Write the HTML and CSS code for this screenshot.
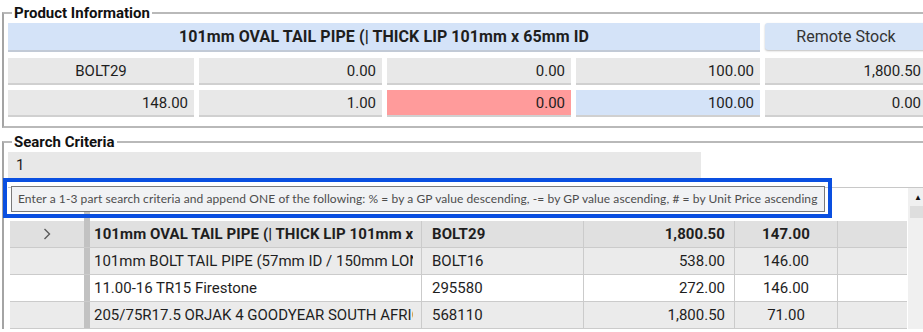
FILE: index.html
```html
<!DOCTYPE html>
<html lang="en">
<head>
  <meta charset="UTF-8" />
  <title>Product Lookup</title>
  <link rel="stylesheet" href="styles.css">
</head>
<body>
  <fieldset class="group product">
    <legend>Product Information</legend>
    <div class="info-grid">
      <div class="title-bar">101mm OVAL TAIL PIPE (| THICK LIP 101mm x 65mm ID</div>
      <button class="remote-btn">Remote Stock</button>
      <div class="cell center">BOLT29</div>
      <div class="cell">0.00</div>
      <div class="cell">0.00</div>
      <div class="cell">100.00</div>
      <div class="cell">1,800.50</div>
      <div class="cell">148.00</div>
      <div class="cell">1.00</div>
      <div class="cell warn">0.00</div>
      <div class="cell info">100.00</div>
      <div class="cell">0.00</div>
    </div>
  </fieldset>

  <fieldset class="group search">
    <legend>Search Criteria</legend>
    <div class="search-body">
      <div class="search-input">1</div>

      <div class="results">
        <div class="rows">
          <div class="grid-row head">
            <div class="rh"></div><div class="bar"></div>
            <div class="gc"></div><div class="gc"></div><div class="gc"></div><div class="gc"></div><div class="gc"></div>
          </div>
          <div class="grid-row current">
            <div class="rh">
              <svg width="8" height="12" viewBox="0 0 8 12"><polyline points="1.5,1 6.5,6 1.5,11" fill="none" stroke="#5a5a5a" stroke-width="1.4"/></svg>
            </div>
            <div class="bar"></div>
            <div class="gc desc"><span class="clip">101mm OVAL TAIL PIPE (| THICK LIP 101mm x 65mm ID</span></div>
            <div class="gc code">BOLT29</div>
            <div class="gc num">1,800.50</div>
            <div class="gc mid">147.00</div>
            <div class="gc"></div>
          </div>
          <div class="grid-row alt">
            <div class="rh"></div><div class="bar"></div>
            <div class="gc desc"><span class="clip">101mm BOLT TAIL PIPE (57mm ID / 150mm LONG)</span></div>
            <div class="gc code">BOLT16</div>
            <div class="gc num">538.00</div>
            <div class="gc mid">146.00</div>
            <div class="gc"></div>
          </div>
          <div class="grid-row">
            <div class="rh"></div><div class="bar"></div>
            <div class="gc desc"><span class="clip">11.00-16 TR15 Firestone</span></div>
            <div class="gc code">295580</div>
            <div class="gc num">272.00</div>
            <div class="gc mid">146.00</div>
            <div class="gc"></div>
          </div>
          <div class="grid-row alt">
            <div class="rh"></div><div class="bar"></div>
            <div class="gc desc"><span class="clip">205/75R17.5 ORJAK 4 GOODYEAR SOUTH AFRICA</span></div>
            <div class="gc code">568110</div>
            <div class="gc num">1,800.50</div>
            <div class="gc mid">71.00</div>
            <div class="gc"></div>
          </div>
        </div>
        <div class="scrollbar">
          <span class="arrow">&#9650;</span>
          <div class="thumb"></div>
        </div>
      </div>

      <div class="hint">
        <div class="hint-box">Enter a 1-3 part search criteria and append ONE of the following: % = by a GP value descending, -= by GP value ascending, # = by Unit Price ascending</div>
      </div>
    </div>
  </fieldset>
</body>
</html>
```

FILE: styles.css
```css
html, body {
  overflow: hidden;
}
body {
  margin: 0;
  background: #fff;
  color: #1e1e1e;
  font-family: Roboto, "Liberation Sans", Arial, sans-serif;
  font-size: 15px;
}
.group {
  margin: 0 -20px 0 2px;
  padding: 1px 0 9px 4px;
  border: 2px solid #b9b9b9;
  border-left-color: #a4a4a4;
  min-width: 0;
}
.group legend {
  margin-left: 4px;
  padding: 0 2px;
  font-weight: bold;
  font-size: 15px;
  line-height: 18px;
  color: #111;
}
.product {
  margin-top: 4px;
}
.search {
  margin-top: 5px;
  padding-bottom: 0;
  border-bottom: none;
}

/* product info */
.info-grid {
  display: grid;
  grid-template-columns: 186px 183px 184px 184px 162px;
  column-gap: 5px;
  row-gap: 5px;
}
.title-bar {
  grid-column: 1 / 5;
  height: 29px;
  margin-bottom: 1px;
  box-sizing: border-box;
  background: #d4e3f8;
  border-bottom: 2px solid #c2cad6;
  font-weight: bold;
  font-size: 16px;
  letter-spacing: 0.08px;
  text-align: center;
  line-height: 28px;
}
.remote-btn {
  height: 27px;
  margin: 0;
  padding: 0;
  border: none;
  border-radius: 3px;
  background: #d6e4f7;
  box-shadow: 0 1px 2px rgba(0, 0, 0, 0.25);
  font-family: inherit;
  font-size: 16px;
  color: #333;
}
.cell {
  height: 27px;
  box-sizing: border-box;
  padding: 0 6px;
  background: #e8e8e8;
  border-bottom: 2px solid #d0d0d0;
  text-align: right;
  line-height: 26px;
}
.cell.center {
  text-align: center;
}
.cell.warn {
  background: #ff9b9b;
}
.cell.info {
  background: #d4e3f8;
}

/* search */
.search-body {
  position: relative;
}
.search-input {
  width: 693px;
  height: 26px;
  box-sizing: border-box;
  padding-left: 8px;
  background: #e8e8e8;
  line-height: 26px;
}
.results {
  display: flex;
  margin-top: 9px;
  padding-left: 2px;
  border-top: 1px solid #c8c8c8;
}
.rows {
  width: 897px;
}
.grid-row {
  display: grid;
  grid-template-columns: 74px 6px 331px 162px 151px 103px 69px;
  height: 27px;
  box-sizing: border-box;
  border-bottom: 1px solid #cbcbcb;
  background: #fff;
}
.grid-row.head {
  height: 33px;
  border-bottom: none;
}
.grid-row.current {
  background: #e0e0e0;
  font-weight: bold;
  letter-spacing: 0.08px;
}
.grid-row.alt {
  background: #ebebeb;
}
.grid-row .rh {
  display: flex;
  align-items: center;
  justify-content: center;
}
.grid-row .bar {
  background: #c2c2c2;
}
.gc {
  border-left: 1px solid #cbcbcb;
  line-height: 26px;
  white-space: nowrap;
  overflow: hidden;
}
.grid-row.head .gc {
  border-left: none;
}
.gc:nth-child(3) {
  border-left: none;
}
.gc.desc {
  padding: 0 8px 0 4px;
}
.gc .clip {
  display: block;
  overflow: hidden;
}
.gc.code {
  padding-left: 10px;
}
.gc.num {
  padding-right: 9px;
  text-align: right;
}
.gc.mid {
  text-align: center;
}
.scrollbar {
  position: relative;
  width: 20px;
  margin-left: 1px;
  background: #f0f0f0;
}
.scrollbar .arrow {
  display: block;
  margin-top: 5px;
  font-size: 8px;
  line-height: 10px;
  text-align: center;
  color: #111;
}
.scrollbar .thumb {
  height: 12px;
  margin: 3px 0 0 2px;
  background: #dedede;
}

/* focus hint over the grid */
.hint {
  position: absolute;
  top: 26px;
  left: -5px;
  width: 829px;
  height: 40px;
  box-sizing: border-box;
  padding: 4px 3px 2px 4px;
  border: 4px solid #0a4fe0;
}
.hint-box {
  height: 26px;
  box-sizing: border-box;
  padding-left: 6px;
  background: #f1f2f4;
  border: 1px solid #7a7a7a;
  font-family: Lato, "Liberation Sans", sans-serif;
  font-size: 12px;
  letter-spacing: 0.08px;
  line-height: 24px;
  color: #4d4d4d;
  white-space: nowrap;
  overflow: hidden;
}
```
